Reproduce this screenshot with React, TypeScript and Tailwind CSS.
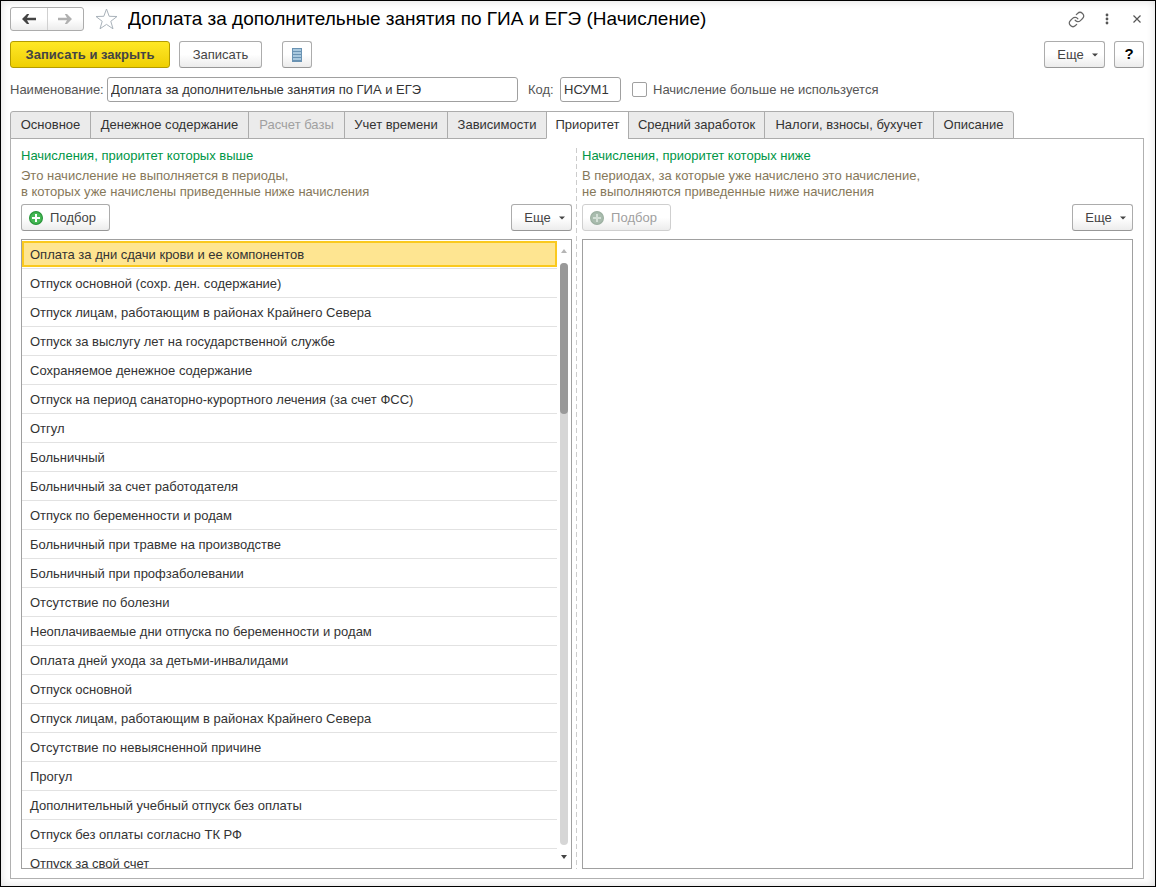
import { useState } from "react";
import type { ReactNode } from "react";
import clsx from "clsx";
import { Link } from "lucide-react";

const TABS = [
  { id: "main", label: "Основное", width: "w-[81px]" },
  { id: "salary", label: "Денежное содержание", width: "w-[159px]" },
  { id: "base", label: "Расчет базы", width: "w-[97px]", disabled: true },
  { id: "time", label: "Учет времени", width: "w-[104px]" },
  { id: "deps", label: "Зависимости", width: "w-[100px]" },
  { id: "priority", label: "Приоритет", width: "w-[83px]" },
  { id: "average", label: "Средний заработок", width: "w-[137px]" },
  { id: "taxes", label: "Налоги, взносы, бухучет", width: "w-[170px]" },
  { id: "about", label: "Описание", width: "w-[81px]" },
];

const HIGHER = [
  "Оплата за дни сдачи крови и ее компонентов",
  "Отпуск основной (сохр. ден. содержание)",
  "Отпуск лицам, работающим в районах Крайнего Севера",
  "Отпуск за выслугу лет на государственной службе",
  "Сохраняемое денежное содержание",
  "Отпуск на период санаторно-курортного лечения (за счет ФСС)",
  "Отгул",
  "Больничный",
  "Больничный за счет работодателя",
  "Отпуск по беременности и родам",
  "Больничный при травме на производстве",
  "Больничный при профзаболевании",
  "Отсутствие по болезни",
  "Неоплачиваемые дни отпуска по беременности и родам",
  "Оплата дней ухода за детьми-инвалидами",
  "Отпуск основной",
  "Отпуск лицам, работающим в районах Крайнего Севера",
  "Отсутствие по невыясненной причине",
  "Прогул",
  "Дополнительный учебный отпуск без оплаты",
  "Отпуск без оплаты согласно ТК РФ",
  "Отпуск за свой счет",
];

interface ToolButtonProps {
  children: ReactNode;
  className?: string;
  disabled?: boolean;
  label?: string;
}

function ToolButton({ children, className, disabled, label }: ToolButtonProps) {
  return (
    <button
      type="button"
      disabled={disabled}
      aria-label={label}
      className={clsx(
        "flex h-[27px] shrink-0 items-center justify-center rounded-[3px] border bg-linear-to-b from-white from-50% to-[#ececec]",
        disabled ? "border-[#cfcfcf] text-[#a0a0a0]" : "border-[#acacac] border-b-[#979797] text-[#444444]",
        className
      )}
    >
      {children}
    </button>
  );
}

function MoreButton() {
  return (
    <ToolButton className="w-[61px] gap-2 pl-1.5">
      Еще
      <svg width="6" height="4" viewBox="0 0 6 4" aria-hidden="true">
        <path d="M0 .5h6L3 3.5z" fill="#444" />
      </svg>
    </ToolButton>
  );
}

function PickButton({ disabled }: { disabled?: boolean }) {
  return (
    <ToolButton className="w-[89px] gap-[7px] pr-1.5" disabled={disabled}>
      <svg width="14" height="14" viewBox="0 0 14 14" aria-hidden="true">
        <circle cx="7" cy="7" r="6.4" fill={disabled ? "#a9bcae" : "#45b854"} stroke={disabled ? "#9cb0a1" : "#2a963b"} strokeWidth="1.2" />
        <path d="M7 3v8M3 7h8" stroke={disabled ? "#d3dfd6" : "#fff"} strokeWidth="2" />
      </svg>
      Подбор
    </ToolButton>
  );
}

function ScrollBar() {
  return (
    <div className="flex w-[14px] shrink-0 flex-col items-center pt-[9px] pb-[9px]" aria-hidden="true">
      <svg width="6" height="4" viewBox="0 0 6 4">
        <path d="M3 0l3 4H0z" fill="#b5b5b5" />
      </svg>
      <div className="my-2.5 w-2 flex-1 rounded-full bg-[#d6d6d6]">
        <div className="h-[26%] rounded-full bg-[#999999]" />
      </div>
      <svg width="6" height="4" viewBox="0 0 6 4">
        <path d="M0 0h6L3 4z" fill="#444" />
      </svg>
    </div>
  );
}

interface PriorityColumnProps {
  title: string;
  hint: [string, string];
  disabled?: boolean;
  children?: ReactNode;
}

function PriorityColumn({ title, hint, disabled, children }: PriorityColumnProps) {
  return (
    <section className="flex min-h-0 min-w-0 flex-1 flex-col">
      <h2 className="leading-4 text-[#009646]">{title}</h2>
      <p className="mt-1 leading-4 text-[#86785a]">
        {hint[0]}
        <br />
        {hint[1]}
      </p>
      <div className="mt-1 flex justify-between">
        <PickButton disabled={disabled} />
        <MoreButton />
      </div>
      <div className="mt-2 flex min-h-0 flex-1 overflow-hidden border border-[#a0a0a0]">{children}</div>
    </section>
  );
}

export default function App() {
  const [tab, setTab] = useState("priority");
  const [selected, setSelected] = useState(0);
  const [name, setName] = useState("Доплата за дополнительные занятия по ГИА и ЕГЭ");
  const [code, setCode] = useState("НСУМ1");

  return (
    <div className="flex h-screen flex-col border border-black bg-white pt-1.5 pr-[11px] pb-[7px] pl-[9px] font-['Liberation_Sans',Arial,sans-serif] text-[13px] text-[#333333] shadow-[inset_0_0_8px_#dddddd]">
      {/* Title bar */}
      <header className="flex h-6 shrink-0 items-center">
        <div className="flex h-6 w-[74px] shrink-0 rounded-[3px] border border-[#acacac] bg-linear-to-b from-white from-50% to-[#ececec]">
          <button type="button" aria-label="Назад" className="flex flex-1 items-center justify-center border-r border-[#d0d0d0]">
            <svg width="14" height="10" viewBox="0 0 14 10" fill="#444">
              <path d="M0 5L5 0h2.200L5 3.800h9v2.400H5L7.200 10H5z" />
            </svg>
          </button>
          <button type="button" aria-label="Вперед" className="flex flex-1 items-center justify-center">
            <svg width="14" height="10" viewBox="0 0 14 10" fill="#b0b0b0">
              <path d="M14 5L9 0H6.800L9 3.800H0v2.400h9L6.800 10H9z" />
            </svg>
          </button>
        </div>
        <button type="button" aria-label="В избранное" className="ml-[11px] shrink-0">
          <svg width="23" height="22" viewBox="0 0 23 22" fill="#fff" stroke="#a9b2ba" strokeWidth="1">
            <path d="M11.500 1l2.700 7.300 7.800.2-6.200 4.800 2.200 7.500-6.500-4.400L5 20.800l2.200-7.500L1 8.500l7.800-.2z" />
          </svg>
        </button>
        <h1 className="ml-2.5 flex-1 truncate text-[19px] leading-6 text-black">
          Доплата за дополнительные занятия по ГИА и ЕГЭ (Начисление)
        </h1>
        <div className="flex shrink-0 items-center pr-[3px]">
          <button type="button" aria-label="Ссылка">
            <Link size={17} strokeWidth={1.7} color="#666" />
          </button>
          <button type="button" aria-label="Меню" className="ml-5">
            <svg width="4" height="12" viewBox="0 0 4 12" fill="#555">
              <circle cx="2" cy="2" r="1.400" />
              <circle cx="2" cy="6" r="1.400" />
              <circle cx="2" cy="10" r="1.400" />
            </svg>
          </button>
          <button type="button" aria-label="Закрыть" className="ml-6">
            <svg width="8" height="8" viewBox="0 0 8 8" stroke="#555" strokeWidth="1.200">
              <path d="M.5.5l7 7M7.500.5l-7 7" />
            </svg>
          </button>
        </div>
      </header>

      {/* Commands */}
      <div className="mt-2.5 flex shrink-0 items-center">
        <button
          type="button"
          className="h-[27px] w-40 shrink-0 rounded-[3px] border border-[#b39b00] bg-linear-to-b from-[#ffe824] to-[#efcf00] font-bold text-[#444444]"
        >
          Записать и закрыть
        </button>
        <ToolButton className="ml-[9px] w-[83px]">Записать</ToolButton>
        <ToolButton className="ml-5 w-[30px]" label="Список">
          <svg width="10" height="14" viewBox="0 0 10 14" aria-hidden="true">
            <rect width="10" height="14" fill="#6a93b3" />
            <path d="M1 2h8M1 5h8M1 8h8M1 11h8" stroke="#a8c8de" strokeWidth="2" />
          </svg>
        </ToolButton>
        <div className="ml-auto flex gap-[9px]">
          <MoreButton />
          <ToolButton className="w-[30px] font-bold" label="Справка">
            <span className="text-[15px] text-black">?</span>
          </ToolButton>
        </div>
      </div>

      {/* Requisites */}
      <div className="mt-[9px] flex shrink-0 items-center text-[#555555]">
        <label htmlFor="name" className="w-[97px] shrink-0 whitespace-nowrap">
          Наименование:
        </label>
        <input
          id="name"
          value={name}
          onChange={(e) => setName(e.target.value)}
          className="h-[25px] w-[411px] rounded-[3px] border border-[#a0a0a0] bg-white px-[3px] text-[#333333]"
        />
        <label htmlFor="code" className="ml-2.5 w-8 shrink-0">
          Код:
        </label>
        <input
          id="code"
          value={code}
          onChange={(e) => setCode(e.target.value)}
          className="h-[25px] w-[61px] rounded-[3px] border border-[#a0a0a0] bg-white px-[3px] text-[#333333]"
        />
        <label className="ml-[11px] flex items-center gap-1.5">
          <input type="checkbox" className="size-[15px] appearance-none rounded-[2px] border border-[#a0a0a0] bg-white checked:bg-[#ffe824]" />
          Начисление больше не используется
        </label>
      </div>

      {/* Tabs overlap the panel border by one pixel */}
      <div role="tablist" className="relative mt-[9px] -mb-px flex shrink-0">
        {TABS.map((t, i) => (
          <button
            key={t.id}
            type="button"
            role="tab"
            aria-selected={tab === t.id}
            disabled={t.disabled}
            onClick={() => setTab(t.id)}
            className={clsx(
              "h-7 border border-[#acacac] whitespace-nowrap",
              t.width,
              i > 0 && "-ml-px",
              i === 0 && "rounded-tl-[3px]",
              i === TABS.length - 1 && "rounded-tr-[3px]",
              tab === t.id ? "border-b-white bg-white" : "bg-[#ebebeb]",
              t.disabled && "text-[#a0a0a0]"
            )}
          >
            {t.label}
          </button>
        ))}
      </div>

      <main role="tabpanel" className="flex min-h-0 flex-1 border border-[#b0b0b0] px-2.5 pt-[9px] pb-[9px]">
        <PriorityColumn
          title="Начисления, приоритет которых выше"
          hint={["Это начисление не выполняется в периоды,", "в которых уже начислены приведенные ниже начисления"]}
        >
          <ul role="listbox" className="min-w-0 flex-1 overflow-hidden">
            {HIGHER.map((item, i) => (
              <li
                key={i}
                role="option"
                aria-selected={selected === i}
                onClick={() => setSelected(i)}
                className="h-[29px] border-b border-[#e2e2e2] py-px"
              >
                <div
                  className={clsx(
                    "h-[26px] truncate border-2 px-1.5 leading-6",
                    selected === i ? "border-[#fac91e] bg-[#fee591]" : "border-transparent"
                  )}
                >
                  {item}
                </div>
              </li>
            ))}
          </ul>
          <ScrollBar />
        </PriorityColumn>
        <div className="mr-[5px] ml-1 w-px shrink-0 bg-[repeating-linear-gradient(to_bottom,#cccccc_0_5px,transparent_5px_8px)]" />
        <PriorityColumn
          title="Начисления, приоритет которых ниже"
          hint={["В периодах, за которые уже начислено это начисление,", "не выполняются приведенные ниже начисления"]}
          disabled
        />
      </main>
    </div>
  );
}
